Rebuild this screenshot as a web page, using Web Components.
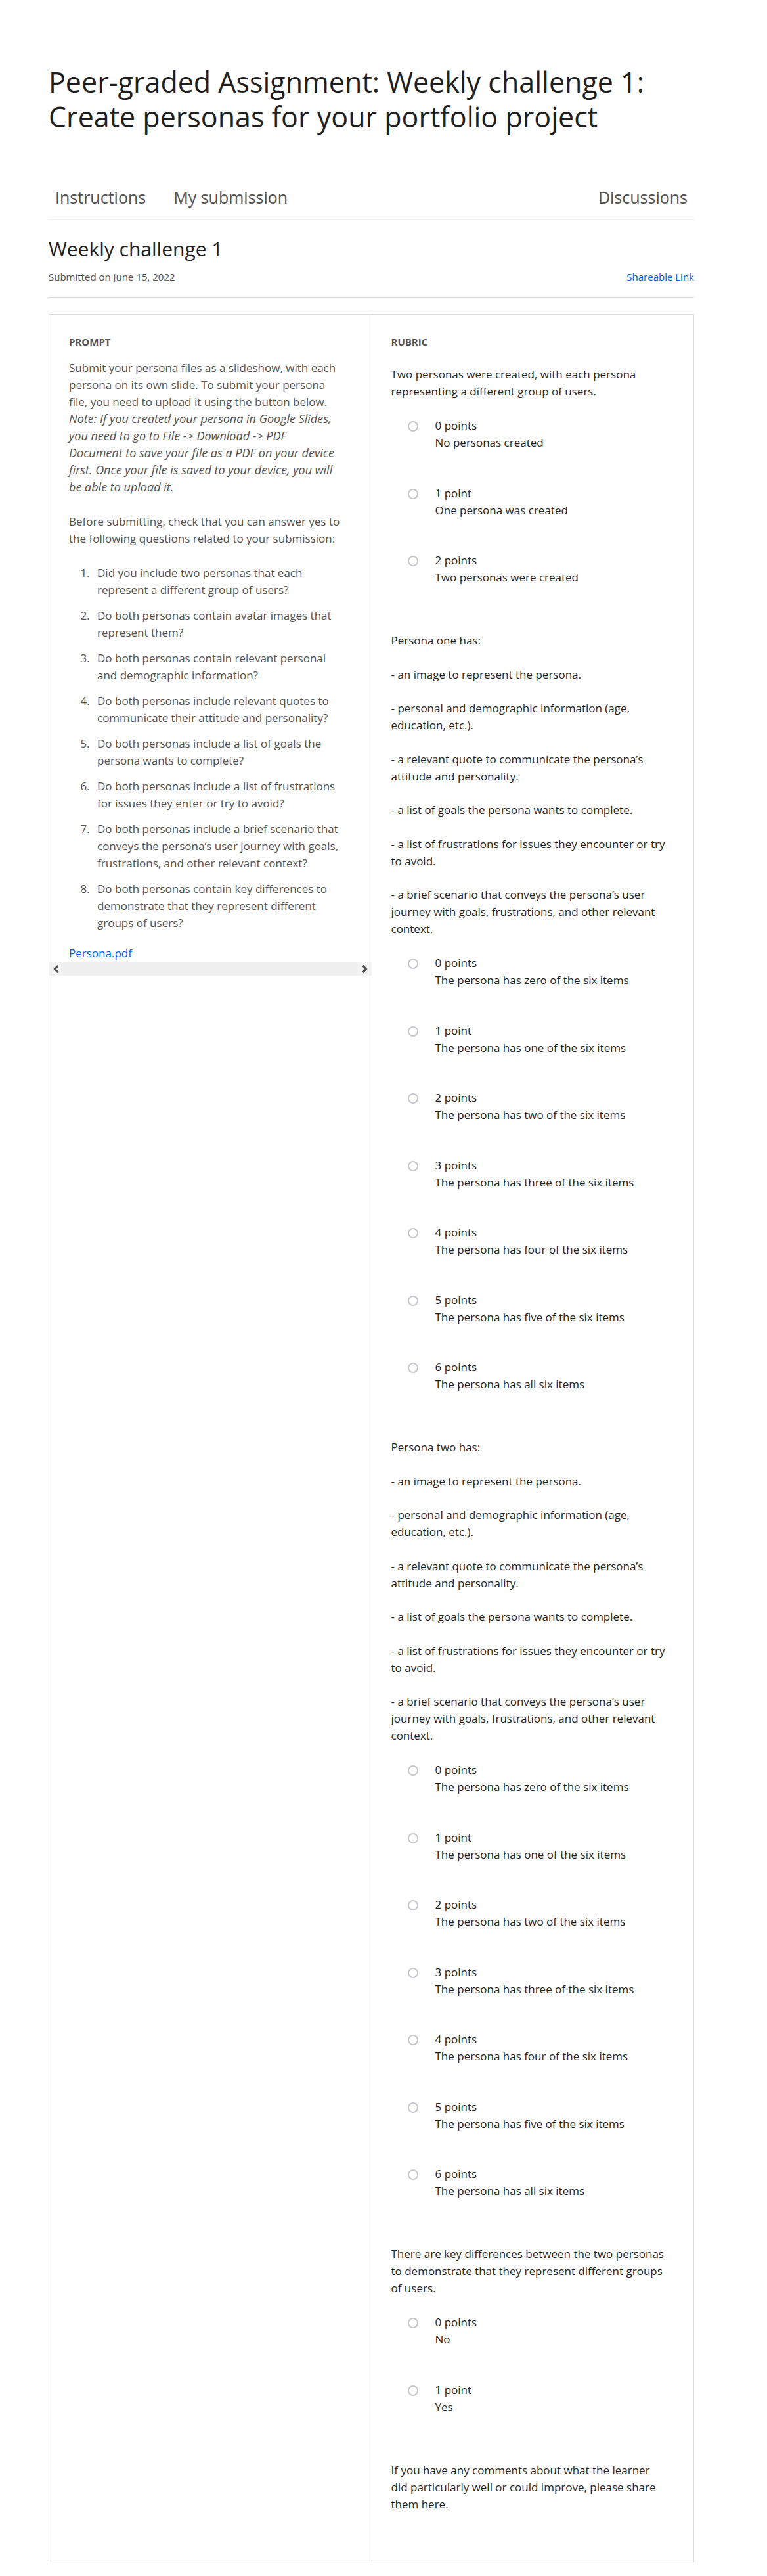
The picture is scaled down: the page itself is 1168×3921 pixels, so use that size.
<!DOCTYPE html>
<html lang="en">
<head>
<meta charset="utf-8">
<meta name="viewport" content="width=device-width, initial-scale=1">
<title>Peer-graded Assignment: Weekly challenge 1</title>
<style>
  body {
    margin: 0;
    background: #fff;
    color: #1f1f1f;
    font: 17px/26px "Open Sans", "Noto Sans", sans-serif;
  }
</style>
</head>
<body>
<assignment-page></assignment-page>

<template id="t-page">
  <style>
    :host { display: block; padding: 98px 111px 22px 74px; }
    h1 { margin: 0; font-size: 43px; line-height: 53px; font-weight: 400; }
    .review {
      display: grid;
      grid-template-columns: 1fr 1fr;
      margin-top: 25px;
      border: 1px solid #ddd;
    }
    rubric-panel { border-left: 1px solid #ddd; }
  </style>
  <h1>Peer-graded Assignment: Weekly challenge 1: Create personas for your portfolio project</h1>
  <assignment-tabs></assignment-tabs>
  <submission-header date="June 15, 2022" link="Shareable Link">Weekly challenge 1</submission-header>
  <div class="review">
    <prompt-panel></prompt-panel>
    <rubric-panel></rubric-panel>
  </div>
</template>

<template id="t-tabs">
  <style>
    :host { display: block; margin-top: 64px; border-bottom: 1px solid #eee; }
    nav { display: flex; gap: 42px; padding: 15px 10px 17px; font-size: 25px; line-height: 34px; }
    a { color: #525252; text-decoration: none; }
    a:last-child { margin-left: auto; }
  </style>
  <nav aria-label="Assignment">
    <a href="#instructions">Instructions</a>
    <a href="#submission">My submission</a>
    <a href="#discussions">Discussions</a>
  </nav>
</template>

<template id="t-header">
  <style>
    :host { display: block; padding: 24px 0 20px; border-bottom: 1px solid #ddd; }
    h2 { margin: 0; font-size: 30px; line-height: 40px; font-weight: 400; }
    .meta { display: flex; justify-content: space-between; margin-top: 11px; font-size: 15px; line-height: 22px; color: #525252; }
    a { color: #0062e4; text-decoration: none; }
  </style>
  <h2><slot></slot></h2>
  <div class="meta"><span></span><a href="#share"></a></div>
</template>

<template id="t-prompt">
  <style>
    :host { display: block; min-width: 0; padding-top: 30px; color: #525252; }
    .body { padding: 0 40px 0 30px; }
    h3 { margin: 0 0 16px; font-size: 15px; line-height: 22px; font-weight: 700; }
    p { margin: 0 0 26px; }
    em { font-size: 18px; line-height: 22px; }
    ol { margin: 0 0 20px; padding: 0 0 0 36px; }
    li { padding-left: 7px; }
    li + li { margin-top: 13px; }
    a { color: #0062e4; text-decoration: none; }
  </style>
  <div class="body">
    <h3>PROMPT</h3>
    <p>Submit your persona files as a slideshow, with each persona on its own slide. To submit your persona file, you need to upload it using the button below. <em>Note: If you created your persona in Google Slides, you need to go to File -&gt; Download -&gt; PDF Document&nbsp;to save your file as a PDF on your device first.&nbsp;Once your file is saved to your device, you will be&nbsp;able to upload it.</em></p>
    <p>Before submitting, check that you can answer yes to the following questions related to your submission:</p>
    <ol>
      <li>Did you include two personas that each represent a different group of users?</li>
      <li>Do both personas contain avatar images that represent them?</li>
      <li>Do both personas contain relevant personal and demographic information?</li>
      <li>Do both personas include relevant quotes to communicate their attitude and personality?</li>
      <li>Do both personas include a list of goals the persona wants to complete?</li>
      <li>Do both personas include a list of frustrations for issues they enter or try to avoid?</li>
      <li>Do both personas include a brief scenario that conveys the persona’s user journey with goals, frustrations, and other relevant context?</li>
      <li>Do both personas contain key differences to demonstrate that they represent different groups of users?</li>
    </ol>
    <a href="#persona-pdf">Persona.pdf</a>
  </div>
  <scroll-strip></scroll-strip>
</template>

<template id="t-strip">
  <style>
    :host { display: flex; justify-content: space-between; background: #f0f0f0; }
    button { display: flex; align-items: center; justify-content: center; width: 21px; height: 21px; margin: 0; padding: 0; border: 0; background: #f3f3f3; color: #505050; }
    svg { display: block; width: 9px; height: 12px; fill: none; stroke: currentColor; stroke-width: 3; }
  </style>
  <button type="button" aria-label="Scroll left"><svg viewBox="0 0 9 12"><path d="M7.500 1 2.500 6l5 5"/></svg></button>
  <button type="button" aria-label="Scroll right"><svg viewBox="0 0 9 12"><path d="m1.500 1 5 5-5 5"/></svg></button>
</template>

<template id="t-rubric">
  <style>
    :host { display: block; min-width: 0; padding: 30px 40px 4px 29px; }
    h3 { margin: 0 0 26px; font-size: 15px; line-height: 22px; font-weight: 700; color: #525252; }
  </style>
  <h3>RUBRIC</h3>
</template>

<template id="t-question">
  <style>
    :host { display: block; margin-bottom: 70px; }
    fieldset { margin: 0; padding: 0; border: 0; min-width: 0; }
    legend { display: block; padding: 0; margin: 0; }
    p { margin: 0 0 26px; }
    p:nth-child(even) { margin-bottom: 25px; }
    p:last-child { margin-bottom: 0; }
    rubric-option { margin-top: 50px; }
    rubric-option:nth-of-type(even) { margin-top: 51px; }
    rubric-option:first-of-type { margin-top: 26px; }
  </style>
  <fieldset><legend></legend></fieldset>
</template>

<template id="t-option">
  <style>
    :host { display: block; padding-left: 25px; }
    label { display: flex; gap: 26px; align-items: flex-start; }
    input { appearance: none; flex: none; box-sizing: border-box; width: 16px; height: 16px; margin: 6px 0 0; border: 2px solid #c7c6cf; border-radius: 50%; background: #fff; }
    input:checked { border-width: 5px; border-color: #0062e4; }
    span { display: block; }
  </style>
  <label><input type="radio"><span><span class="points"></span><slot></slot></span></label>
</template>

<script>
  const stamp = (host, id) => {
    const root = host.attachShadow({ mode: "open" });
    root.append(document.getElementById(id).content.cloneNode(true));
    return root;
  };

  const personaCriteria = [
    "- an image to represent the persona.",
    "- personal and demographic information (age, education, etc.).",
    "- a relevant quote to communicate the persona’s attitude and personality.",
    "- a list of goals the persona wants to complete.",
    "- a list of frustrations for issues they encounter or try to avoid.",
    "- a brief scenario that conveys the persona’s user journey with goals, frustrations, and other relevant context."
  ];
  const personaOptions = ["zero of the", "one of the", "two of the", "three of the", "four of the", "five of the", "all"]
    .map(amount => `The persona has ${amount} six items`);

  const questions = [
    { text: ["Two personas were created, with each persona representing a different group of users."],
      options: ["No personas created", "One persona was created", "Two personas were created"] },
    { text: ["Persona one has:", ...personaCriteria], options: personaOptions },
    { text: ["Persona two has:", ...personaCriteria], options: personaOptions },
    { text: ["There are key differences between the two personas to demonstrate that they represent different groups of users."],
      options: ["No", "Yes"] },
    { text: ["If you have any comments about what the learner did particularly well or could improve, please share them here."],
      options: [] }
  ];

  customElements.define("rubric-option", class extends HTMLElement {
    connectedCallback() {
      if (this.shadowRoot) return;
      const root = stamp(this, "t-option");
      const points = Number(this.getAttribute("points"));
      root.querySelector(".points").textContent = `${points} ${points === 1 ? "point" : "points"}`;
      const input = root.querySelector("input");
      input.value = points;
      // Radios in separate shadow roots do not share a group, so clear the siblings here.
      input.addEventListener("change", () => {
        for (const other of this.parentNode.querySelectorAll("rubric-option"))
          if (other !== this) other.shadowRoot.querySelector("input").checked = false;
      });
    }
  });

  customElements.define("rubric-question", class extends HTMLElement {
    connectedCallback() {
      if (this.shadowRoot) return;
      const root = stamp(this, "t-question");
      const { text, options } = this.question;
      for (const line of text) {
        const p = document.createElement("p");
        p.textContent = line;
        root.querySelector("legend").append(p);
      }
      options.forEach((label, points) => {
        const option = document.createElement("rubric-option");
        option.setAttribute("points", points);
        option.textContent = label;
        root.querySelector("fieldset").append(option);
      });
    }
  });

  customElements.define("rubric-panel", class extends HTMLElement {
    connectedCallback() {
      if (this.shadowRoot) return;
      const root = stamp(this, "t-rubric");
      for (const question of questions) {
        const element = document.createElement("rubric-question");
        element.question = question;
        root.append(element);
      }
    }
  });

  customElements.define("submission-header", class extends HTMLElement {
    connectedCallback() {
      if (this.shadowRoot) return;
      const root = stamp(this, "t-header");
      root.querySelector("span").textContent = `Submitted on ${this.getAttribute("date")}`;
      root.querySelector("a").textContent = this.getAttribute("link");
    }
  });

  for (const [name, id] of [["scroll-strip", "t-strip"], ["prompt-panel", "t-prompt"], ["assignment-tabs", "t-tabs"], ["assignment-page", "t-page"]]) {
    customElements.define(name, class extends HTMLElement {
      connectedCallback() { if (!this.shadowRoot) stamp(this, id); }
    });
  }
</script>
</body>
</html>
